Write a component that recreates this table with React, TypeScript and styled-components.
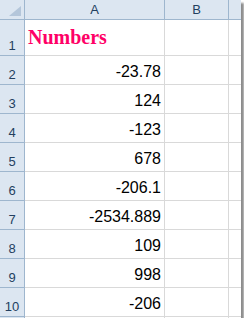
import { Fragment } from "react";
import styled, { createGlobalStyle } from "styled-components";

const GlobalStyle = createGlobalStyle`
  body {
    margin: 0;
    background: #ffffff;
  }
`;

const Sheet = styled.div`
  width: 241px;
  height: 318px;
  overflow: hidden;
  background: #ffffff;
  box-shadow: 3px 3px 2px rgba(0, 0, 0, 0.45);
  display: grid;
  grid-template-columns: 25px 140px 64px 40px;
  grid-template-rows: 20px 36px repeat(10, 29px);
`;

const Corner = styled.div`
  box-sizing: border-box;
  background: #dce6f1;
  border-right: 1px solid #9eb6ce;
  border-bottom: 1px solid #9eb6ce;
  display: flex;
  align-items: flex-end;
  justify-content: flex-end;
  padding: 0 3px 3px 0;
`;

const ColHeader = styled.div`
  box-sizing: border-box;
  background: #dce6f1;
  border-right: 1px solid #9eb6ce;
  border-bottom: 1px solid #9eb6ce;
  display: flex;
  align-items: center;
  justify-content: center;
  font-family: "Liberation Sans", Arial, sans-serif;
  font-size: 13px;
  color: #233f5f;
`;

const RowHeader = styled.div`
  box-sizing: border-box;
  background: #dce6f1;
  border-right: 1px solid #9eb6ce;
  border-bottom: 1px solid #9eb6ce;
  display: flex;
  align-items: flex-end;
  justify-content: center;
  padding-bottom: 3px;
  font-family: "Liberation Sans", Arial, sans-serif;
  font-size: 13px;
  line-height: 13px;
  color: #233f5f;
`;

const Cell = styled.div<{ $title?: boolean }>`
  box-sizing: border-box;
  border-right: 1px solid #d9d9d9;
  border-bottom: 1px solid #d9d9d9;
  display: flex;
  align-items: flex-end;
  justify-content: ${(p) => (p.$title ? "flex-start" : "flex-end")};
  padding: ${(p) => (p.$title ? "0 0 8px 3px" : "0 3px 4px 0")};
  font-family: ${(p) =>
    p.$title ? '"Liberation Serif", "Times New Roman", serif' : '"Liberation Sans", Arial, sans-serif'};
  font-weight: ${(p) => (p.$title ? 700 : 400)};
  font-size: ${(p) => (p.$title ? "20px" : "16px")};
  line-height: ${(p) => (p.$title ? "20px" : "16px")};
  color: ${(p) => (p.$title ? "#ff0066" : "#000000")};
  white-space: nowrap;
`;

const values = ["-23.78", "124", "-123", "678", "-206.1", "-2534.889", "109", "998", "-206", ""];

export default function App() {
  return (
    <>
      <GlobalStyle />
      <Sheet>
        <Corner>
          <svg width="12" height="10" viewBox="0 0 12 10">
            <polygon points="12,0 12,10 0,10" fill="#b4c6da" />
          </svg>
        </Corner>
        <ColHeader>A</ColHeader>
        <ColHeader>B</ColHeader>
        <ColHeader />

        <RowHeader>1</RowHeader>
        <Cell $title>Numbers</Cell>
        <Cell />
        <Cell />

        {values.map((v, i) => (
          <Fragment key={i}>
            <RowHeader>{i < 9 ? i + 2 : ""}</RowHeader>
            <Cell>{v}</Cell>
            <Cell />
            <Cell />
          </Fragment>
        ))}
      </Sheet>
    </>
  );
}
